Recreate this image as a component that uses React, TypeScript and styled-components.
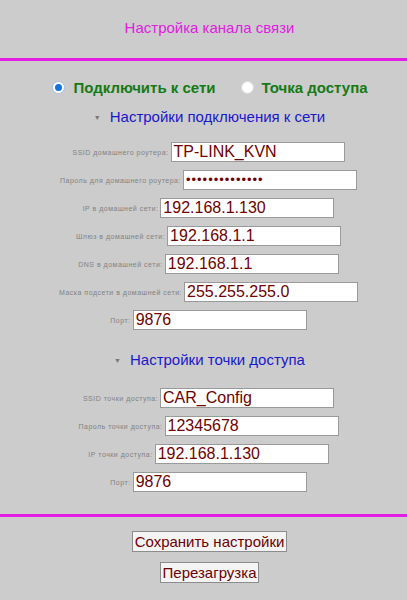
import * as React from 'react';
import styled, { createGlobalStyle } from 'styled-components';

const Global = createGlobalStyle`
  html, body {
    margin: 0;
    padding: 0;
    background: #cccccc;
    font-family: Arial, "Liberation Sans", sans-serif;
  }
`;

const Root = styled.div`
  width: 407px;
  min-height: 600px;
  background: #cccccc;
`;

// content in the original sits a few px right of true centre
const Title = styled.div`
  height: 58px;
  line-height: 56px;
  padding-left: 12px;
  text-align: center;
  color: #e020e0;
  font-size: 15px;
`;

const Rule = styled.div<{ $top?: number }>`
  height: 3px;
  margin-top: ${(p) => p.$top ?? 0}px;
  background: #e31de3;
`;

const Modes = styled.div`
  display: flex;
  justify-content: center;
  align-items: center;
  gap: 26px;
  margin-top: 15px;
  padding-left: 14px;
  height: 22px;
`;

const Mode = styled.label`
  display: flex;
  align-items: center;
  gap: 9px;
  color: #157a15;
  font-size: 15px;
  font-weight: bold;
`;

const Dot = styled.span<{ $on?: boolean }>`
  width: 11px;
  height: 11px;
  border-radius: 50%;
  box-sizing: border-box;
  background: ${(p) => (p.$on ? '#1672d8' : '#ffffff')};
  border: ${(p) => (p.$on ? '2px solid #ffffff' : '1px solid #ffffff')};
  box-shadow: 0 0 0 1px ${(p) => (p.$on ? '#a8c4e8' : '#dddddd')};
`;

const Section = styled.div<{ $top: number }>`
  margin-top: ${(p) => p.$top}px;
  display: flex;
  justify-content: center;
  align-items: center;
  gap: 9px;
  padding-left: 12px;
  color: #1818cc;
  font-size: 15px;
  height: 20px;
`;

const Arrow = styled.span`
  color: #777777;
  font-size: 7px;
  margin-top: 2px;
`;

const Fields = styled.div<{ $top: number }>`
  margin-top: ${(p) => p.$top}px;
  display: flex;
  flex-direction: column;
  gap: 8px;
`;

const Row = styled.div`
  display: flex;
  justify-content: center;
  align-items: center;
  gap: 2px;
  padding-left: 10px;
  height: 20px;
`;

const Label = styled.span`
  color: #828282;
  font-size: 7px;
  letter-spacing: 0.5px;
`;

const Field = styled.div`
  box-sizing: border-box;
  width: 174px;
  height: 20px;
  background: #ffffff;
  border: 1px solid #9a9a9a;
  color: #6e0000;
  font-size: 16px;
  line-height: 18px;
  padding-left: 2px;
  white-space: nowrap;
  overflow: hidden;
`;

const Dots = styled.span`
  font-size: 13px;
  letter-spacing: 1px;
  vertical-align: 1px;
`;

const Footer = styled.div`
  display: flex;
  flex-direction: column;
  align-items: center;
  gap: 10px;
  padding: 14px 0 0 12px;
`;

const Button = styled.button`
  font-family: Arial, "Liberation Sans", sans-serif;
  font-size: 15px;
  color: #6e0000;
  background: #f4f4f4;
  border: 1px solid #8c8c8c;
  padding: 0 2px;
  height: 21px;
  line-height: 18px;
`;

type Item = { label: string; value: string; secret?: boolean };

const homeNet: Item[] = [
  { label: 'SSID домашнего роутера:', value: 'TP-LINK_KVN' },
  { label: 'Пароль для домашнего роутера:', value: '••••••••••••••', secret: true },
  { label: 'IP в домашней сети:', value: '192.168.1.130' },
  { label: 'Шлюз в домашней сети:', value: '192.168.1.1' },
  { label: 'DNS в домашней сети:', value: '192.168.1.1' },
  { label: 'Маска подсети в домашней сети:', value: '255.255.255.0' },
  { label: 'Порт:', value: '9876' },
];

const accessPoint: Item[] = [
  { label: 'SSID точки доступа:', value: 'CAR_Config' },
  { label: 'Пароль точки доступа:', value: '12345678' },
  { label: 'IP точки доступа:', value: '192.168.1.130' },
  { label: 'Порт:', value: '9876' },
];

const Rows = ({ items }: { items: Item[] }) => (
  <>
    {items.map((it) => (
      <Row key={it.label}>
        <Label>{it.label}</Label>
        <Field>{it.secret ? <Dots>{it.value}</Dots> : it.value}</Field>
      </Row>
    ))}
  </>
);

const App = () => (
  <Root>
    <Global />
    <Title>Настройка канала связи</Title>
    <Rule />
    <Modes>
      <Mode>
        <Dot $on />
        Подключить к сети
      </Mode>
      <Mode>
        <Dot />
        Точка доступа
      </Mode>
    </Modes>
    <Section $top={8}>
      <Arrow>▼</Arrow>
      Настройки подключения к сети
    </Section>
    <Fields $top={16}>
      <Rows items={homeNet} />
    </Fields>
    <Section $top={19}>
      <Arrow>▼</Arrow>
      Настройки точки доступа
    </Section>
    <Fields $top={19}>
      <Rows items={accessPoint} />
    </Fields>
    <Rule $top={22} />
    <Footer>
      <Button>Сохранить настройки</Button>
      <Button>Перезагрузка</Button>
    </Footer>
  </Root>
);

export default App;
